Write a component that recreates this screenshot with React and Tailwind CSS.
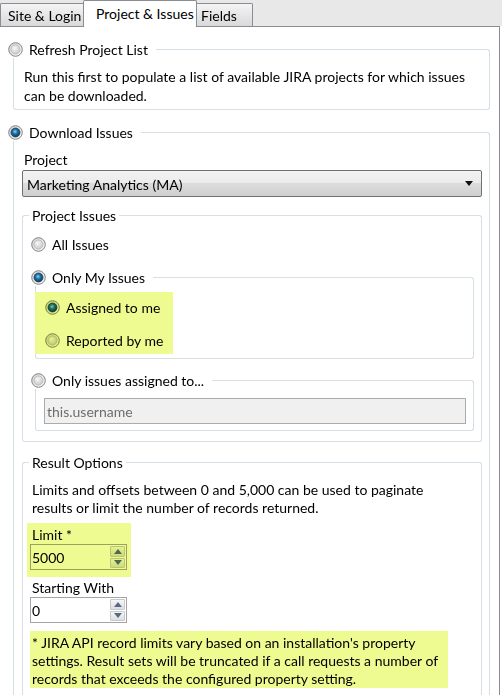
import React, { useId } from "react";

const LINE = "border-[#d5dfe5]";

function Radio({ checked, blend }) {
  const id = useId().replace(/[^a-zA-Z0-9]/g, "");
  return (
    <svg width="15" height="15" viewBox="0 0 15 15" className={`shrink-0 ${blend ? "mix-blend-multiply" : ""}`}>
      <defs>
        <linearGradient id={`o${id}`} x1="0" y1="0" x2="1" y2="1">
          <stop offset="0" stopColor="#cfcfcf" />
          <stop offset="1" stopColor="#fafafa" />
        </linearGradient>
        <radialGradient id={`i${id}`} cx="0.4" cy="0.35" r="0.7">
          <stop offset="0" stopColor="#f8f8f8" />
          <stop offset="1" stopColor="#c6c6c6" />
        </radialGradient>
        <radialGradient id={`c${id}`} cx="0.45" cy="0.4" r="0.65">
          <stop offset="0" stopColor="#8fd2f2" />
          <stop offset="0.4" stopColor="#2372a8" />
          <stop offset="1" stopColor="#0a2e48" />
        </radialGradient>
      </defs>
      <circle cx="7.5" cy="7.5" r="6.8" fill={`url(#o${id})`} stroke="#858585" strokeWidth="1" />
      <circle
        cx="7.5"
        cy="7.5"
        r="4.5"
        fill={checked ? `url(#c${id})` : `url(#i${id})`}
        stroke={checked ? "#163d58" : "#b3b3b3"}
        strokeWidth="0.7"
      />
    </svg>
  );
}

function RadioGroupBox({ label, checked, className, radioMl, bodyClass, children }) {
  return (
    <div className={className}>
      <div className="flex h-[18px]">
        <div className={`flex items-center gap-[6px] ${radioMl}`}>
          <Radio checked={checked} />
          <span className="leading-[18px] pt-px whitespace-nowrap">{label}</span>
        </div>
        <div className={`flex-1 mt-[9px] ml-[8px] border-t border-r ${LINE} rounded-tr-[3px]`} />
      </div>
      <div className={`border-x border-b ${LINE} rounded-b-[3px] ${bodyClass}`}>{children}</div>
    </div>
  );
}

function TextGroupBox({ title, className, bodyClass, children }) {
  return (
    <div className={className}>
      <div className="flex h-[18px]">
        <div className={`w-[7px] mt-[9px] border-t border-l ${LINE} rounded-tl-[3px]`} />
        <span className="px-[3px] pt-px leading-[18px] whitespace-nowrap">{title}</span>
        <div className={`flex-1 mt-[9px] border-t border-r ${LINE} rounded-tr-[3px]`} />
      </div>
      <div className={`border-x border-b ${LINE} ${bodyClass}`}>{children}</div>
    </div>
  );
}

function SpinButton({ up }) {
  return (
    <div className="flex-1 flex items-center justify-center border border-[#c6c9cf] rounded-[1px] bg-[linear-gradient(#f6f6f6,#dedede)]">
      <svg width="8" height="5" viewBox="0 0 8 5">
        <path d={up ? "M0 5 L4 0 L8 5 Z" : "M0 0 L8 0 L4 5 Z"} fill="#56698c" />
      </svg>
    </div>
  );
}

function SpinBox({ value, blend, className }) {
  return (
    <div
      className={`flex w-[97px] h-[26px] border border-[#a5a5a5] bg-white ${blend ? "mix-blend-multiply" : ""} ${className}`}
    >
      <span className="flex-1 pl-[1px] pt-px leading-[24px]">{value}</span>
      <div className="flex flex-col gap-px w-[16px] py-[1px] pr-[1px]">
        <SpinButton up />
        <SpinButton />
      </div>
    </div>
  );
}

export default function App() {
  return (
    <div className="w-[502px] h-[695px] overflow-hidden bg-white text-[14px] text-black font-['Lato','Liberation_Sans',sans-serif]">
      {/* tab strip */}
      <div className="h-[26px] bg-[#e8e8e8] flex items-end">
        <div className="w-[83px] h-[23px] pl-[7px] leading-[23px] border-l border-t border-[#898c95] rounded-tl-[2px] bg-[linear-gradient(#f4f4f4,#d9d9d9)] whitespace-nowrap">
          Site &amp; Login
        </div>
        <div className="relative z-10 w-[114px] h-[27px] mb-[-1px] pl-[12px] leading-[25px] border-x border-t border-[#898c95] rounded-t-[2px] bg-white whitespace-nowrap">
          Project &amp; Issues
        </div>
        <div className="w-[56px] h-[23px] pl-[4px] leading-[23px] border-r border-t border-[#898c95] rounded-tr-[2px] bg-[linear-gradient(#f4f4f4,#d9d9d9)] whitespace-nowrap">
          Fields
        </div>
      </div>

      {/* tab panel */}
      <div className="w-[500px] h-[669px] border-t border-r border-[#898c95]">
        <RadioGroupBox
          label="Refresh Project List"
          className="mt-[13px] ml-[13px] w-[477px]"
          radioMl="ml-[-5px]"
          bodyClass="pt-[8px] pb-[4px] pl-[10px]"
        >
          <p className="leading-[19px] pt-px whitespace-nowrap">
            Run this first to populate a list of available JIRA projects for which issues
            <br />
            can be downloaded.
          </p>
        </RadioGroupBox>

        <RadioGroupBox
          label="Download Issues"
          checked
          className="mt-[13px] ml-[13px] w-[477px]"
          radioMl="ml-[-5px]"
          bodyClass="pt-[9px] pl-[8px] pr-[7px] pb-[40px]"
        >
          <div className="ml-[2px] pt-px leading-[18px]">Project</div>
          <div className="mt-[1px] h-[27px] flex items-center justify-between pl-[4px] pr-[8px] border border-[#707070] rounded-[2px] bg-[linear-gradient(#f3f3f3,#ebebeb_50%,#dcdcdc_50%,#cfcfcf)]">
            <span className="pt-px whitespace-nowrap">Marketing Analytics (MA)</span>
            <svg width="8" height="5" viewBox="0 0 8 5">
              <path d="M0 0 L8 0 L4 5 Z" fill="#111" />
            </svg>
          </div>

          <TextGroupBox title="Project Issues" className="mt-[9px]" bodyClass="rounded-b-[3px] pt-[11px] pl-[8px] pr-[7px] pb-[10px]">
            <div className="h-[18px] flex items-center gap-[6px]">
              <Radio />
              <span className="leading-[18px] pt-px">All Issues</span>
            </div>

            <RadioGroupBox
              label="Only My Issues"
              checked
              className="mt-[15px] ml-[4px]"
              radioMl="ml-[-4px]"
              bodyClass="pt-[6px] pb-[4px]"
            >
              <div className="ml-[-1px] w-[138px] bg-[#edfb91] pt-[6px] pb-[5px] pl-[10px] flex flex-col gap-[15px]">
                <div className="h-[18px] flex items-center gap-[6px]">
                  <Radio checked blend />
                  <span className="leading-[18px] pt-px whitespace-nowrap">Assigned to me</span>
                </div>
                <div className="h-[18px] flex items-center gap-[6px]">
                  <Radio blend />
                  <span className="leading-[18px] pt-px whitespace-nowrap">Reported by me</span>
                </div>
              </div>
            </RadioGroupBox>

            <RadioGroupBox
              label="Only issues assigned to..."
              className="mt-[12px] ml-[4px]"
              radioMl="ml-[-4px]"
              bodyClass="pt-[9px] pl-[8px] pr-[7px] pb-[6px]"
            >
              <div className="h-[26px] pl-[2px] pt-px leading-[24px] border border-[#ababab] bg-[#f0f0f0] text-[#6d6d6d]">
                this.username
              </div>
            </RadioGroupBox>
          </TextGroupBox>

          <TextGroupBox title="Result Options" className="mt-[11px]" bodyClass="pt-[9px] pl-[9px] pb-[20px]">
            <p className="leading-[18px] pt-px whitespace-nowrap">
              Limits and offsets between 0 and 5,000 can be used to paginate
              <br />
              results or limit the number of records returned.
            </p>
            <div className="mt-[6px] ml-[-5px] w-[104px] bg-[#edfb91] pt-[2px] pl-[5px] pb-[7px]">
              <div className="leading-[18px] pt-px">Limit *</div>
              <SpinBox value="5000" blend className="ml-[-2px]" />
            </div>
            <div className="mt-[1px] pt-px leading-[18px]">Starting With</div>
            <SpinBox value="0" className="mt-[0px] ml-[-2px]" />
            <p className="mt-[8px] ml-[-2px] w-[418px] bg-[#edfb91] pt-[3px] pl-[2px] leading-[18px] whitespace-nowrap">
              * JIRA API record limits vary based on an installation's property
              <br />
              settings. Result sets will be truncated if a call requests a number of
              <br />
              records that exceeds the configured property setting.
            </p>
          </TextGroupBox>
        </RadioGroupBox>
      </div>
    </div>
  );
}
